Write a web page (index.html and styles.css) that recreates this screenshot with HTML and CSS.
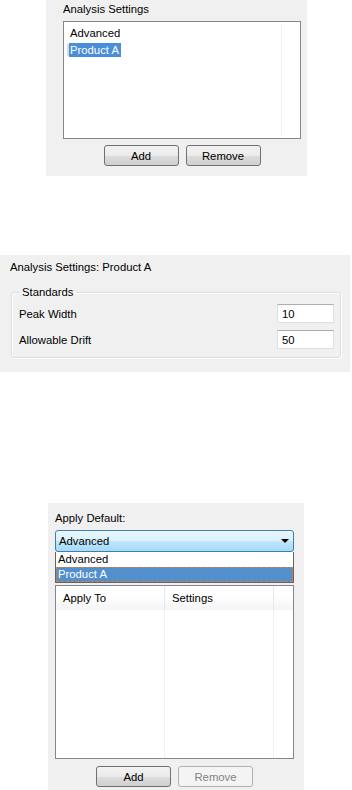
FILE: index.html
```html
<!DOCTYPE html>
<html lang="en">
<head>
    <meta charset="UTF-8">
    <meta name="viewport" content="width=device-width, initial-scale=1.0">
    <title>Analysis Settings</title>
    <link rel="stylesheet" href="styles.css">
</head>
<body>
    <!-- Settings list -->
    <div class="panel panel-list">
        <div class="caption">Analysis Settings</div>
        <div class="listbox">
            <div class="list-item">Advanced</div>
            <div class="list-item"><span class="selected">Product A</span></div>
            <div class="scroll-line"></div>
        </div>
        <div class="button-row">
            <button class="btn">Add</button>
            <button class="btn">Remove</button>
        </div>
    </div>

    <!-- Settings detail -->
    <div class="panel panel-detail">
        <div class="caption">Analysis Settings: Product A</div>
        <fieldset class="group">
            <legend>Standards</legend>
            <div class="field">
                <span>Peak Width</span>
                <input class="text-input" type="text" value="10">
            </div>
            <div class="field">
                <span>Allowable Drift</span>
                <input class="text-input" type="text" value="50">
            </div>
        </fieldset>
    </div>

    <!-- Apply default -->
    <div class="panel panel-apply">
        <div class="caption">Apply Default:</div>
        <div class="combo">
            <span>Advanced</span>
            <span class="arrow"></span>
        </div>
        <div class="dropdown">
            <div class="drop-item">Advanced</div>
            <div class="drop-item active">Product A</div>
        </div>
        <div class="listview">
            <div class="lv-header">
                <div class="lv-col col-apply">Apply To</div>
                <div class="lv-col col-settings">Settings</div>
                <div class="lv-col col-rest"></div>
            </div>
            <div class="lv-body">
                <div class="lv-col col-apply"></div>
                <div class="lv-col col-settings"></div>
                <div class="lv-col col-rest"></div>
            </div>
        </div>
        <div class="button-row">
            <button class="btn">Add</button>
            <button class="btn" disabled>Remove</button>
        </div>
    </div>
</body>
</html>
```

FILE: styles.css
```css
:root {
    --panel-bg: #f0f0f0;
    --text-color: #000000;
    --select-color: #4a8edb;
}

body {
    font-family: 'Liberation Sans', Arial, sans-serif;
    font-size: 11.3px;
    color: var(--text-color);
    background-color: white;
    margin: 0;
    padding: 0;
    width: 352px;
}

.panel {
    background-color: var(--panel-bg);
    box-sizing: border-box;
}

.caption {
    line-height: 13px;
}

/* settings list */
.panel-list {
    margin-left: 46px;
    width: 261px;
    height: 176px;
    padding: 3px 6px 0 17px;
}

.listbox {
    position: relative;
    margin-top: 5px;
    width: 238px;
    height: 118px;
    box-sizing: border-box;
    border: 1px solid #828790;
    background: white;
    padding: 3px 0 0 2px;
}

.list-item {
    height: 17px;
    line-height: 17px;
    padding-left: 4px;
}

.list-item .selected {
    display: inline-block;
    background-color: var(--select-color);
    color: white;
    padding: 0 2px 0 1px;
    line-height: 14px;
    margin-left: -1px;
    box-shadow: -3px 0 0 -1px #dcdcdc;
}

.scroll-line {
    position: absolute;
    top: 2px;
    bottom: 2px;
    right: 18px;
    width: 1px;
    background: #f0f0f0;
}

.button-row {
    display: flex;
    justify-content: center;
    gap: 7px;
    margin-top: 6px;
}

.btn {
    width: 75px;
    height: 21px;
    font-family: inherit;
    font-size: 11.3px;
    color: black;
    border: 1px solid #707070;
    border-radius: 3px;
    background: linear-gradient(to bottom, #f2f2f2 0%, #ebebeb 50%, #dddddd 51%, #cfcfcf 100%);
    padding: 0;
}

.btn:disabled {
    color: #838383;
    border-color: #adb2b5;
    background: #f4f4f4;
}

/* settings detail */
.panel-detail {
    margin-top: 79px;
    width: 350px;
    height: 117px;
    padding: 6px 9px 0 10px;
}

.group {
    margin: 12px 0 0 1px;
    padding: 5px 7px 8px 7px;
    border: 1px solid #d5dfe5;
    border-radius: 3px;
    box-shadow: inset 1px 1px 0 white, 1px 1px 0 white;
}

.group legend {
    padding: 0 2px;
    margin-left: 1px;
    line-height: 13px;
}

.field {
    display: flex;
    justify-content: space-between;
    align-items: center;
    height: 19px;
    margin-bottom: 7px;
}

.field:last-child {
    margin-bottom: 0;
}

.text-input {
    width: 57px;
    height: 19px;
    box-sizing: border-box;
    border: 1px solid #dbdfe6;
    border-top-color: #abadb3;
    background: white;
    font-family: inherit;
    font-size: 11.3px;
    padding: 0 4px;
    margin-right: -1px;
}

/* apply default */
.panel-apply {
    margin-top: 131px;
    margin-left: 48px;
    width: 256px;
    height: 287px;
    padding: 9px 10px 0 7px;
}

.combo {
    display: flex;
    justify-content: space-between;
    align-items: center;
    margin-top: 5px;
    height: 22px;
    box-sizing: border-box;
    border: 1px solid #3c7fb1;
    border-radius: 3px;
    background: linear-gradient(to bottom, #eaf6fd 0%, #d9f0fc 50%, #bee6fd 51%, #a7d9f5 100%);
    padding: 0 4px 0 3px;
}

.arrow {
    width: 0;
    height: 0;
    border-left: 4px solid transparent;
    border-right: 4px solid transparent;
    border-top: 4px solid black;
}

.dropdown {
    border: 1px solid #646464;
    border-top: none;
    background: white;
}

.drop-item {
    height: 15px;
    line-height: 15px;
    padding-left: 2px;
}

.drop-item.active {
    box-sizing: border-box;
    background-color: #528fcd;
    color: white;
    height: 15px;
    border: 1px dashed #e07a2c;
    line-height: 13px;
    padding-left: 1px;
}

.listview {
    margin-top: 2px;
    height: 174px;
    box-sizing: border-box;
    border: 1px solid #828790;
    background: white;
    display: flex;
    flex-direction: column;
}

.lv-header {
    display: flex;
    height: 24px;
    background: linear-gradient(to bottom, #ffffff 0%, #ffffff 40%, #f3f4f6 100%);
}

.lv-body {
    display: flex;
    flex: 1;
}

.lv-col {
    box-sizing: border-box;
    border-right: 1px solid #e3e8ec;
    padding: 6px 0 0 7px;
}

.lv-body .lv-col {
    border-right-color: #eaf1f8;
}

.col-apply {
    width: 109px;
}

.col-settings {
    width: 109px;
}

.col-rest {
    flex: 1;
    border-right: none;
}

.panel-apply .button-row {
    margin-top: 7px;
}
```
